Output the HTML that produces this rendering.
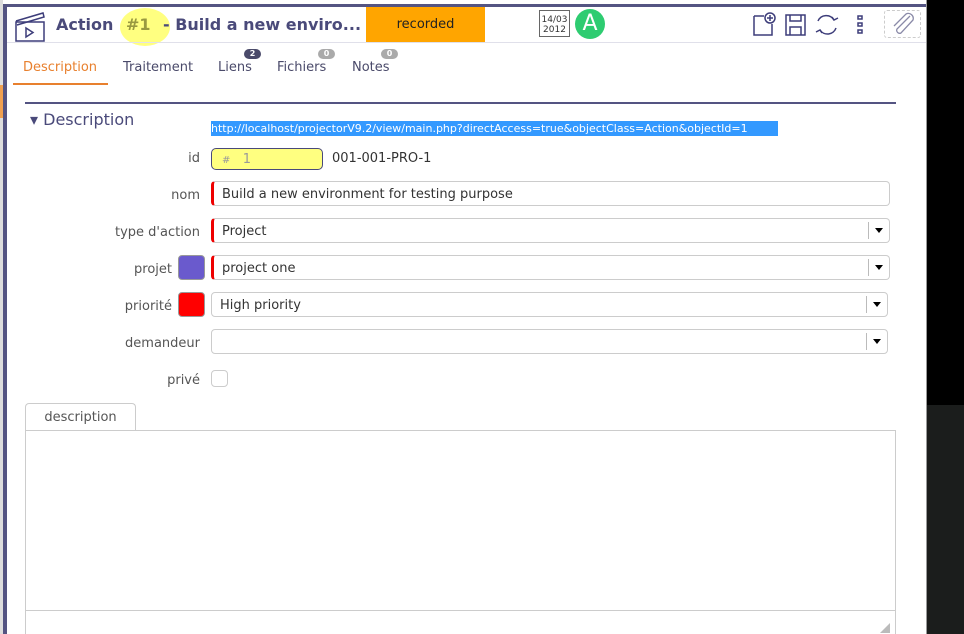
<!DOCTYPE html>
<html><head><meta charset="utf-8"><style>
html,body{margin:0;width:964px;height:634px;overflow:hidden}
body{background:#000;font-family:"DejaVu Sans","Liberation Sans",sans-serif;position:relative}
.page{position:absolute;left:0;top:0;width:926px;height:634px;background:#fff;border-right:1px solid #999}
.lb{position:absolute;left:0;top:0;width:3px;height:634px;background:#ddd}
.lo{position:absolute;left:0;top:85px;width:3px;height:33px;background:#f0a050}
.lp{position:absolute;left:3px;top:4px;width:4px;height:630px;background:#545482}
.tp{position:absolute;left:3px;top:4px;width:923px;height:3px;background:#545482}
.t{position:absolute;white-space:nowrap}
.hdr{position:absolute;left:7px;top:42px;width:919px;height:1px;background:#e0e0ea}
.lbl{position:absolute;right:0;font-size:13px;color:#555;text-align:right}
.inp{position:absolute;left:211px;height:25px;border:1px solid #ccc;border-radius:4px;box-sizing:border-box;font-size:13px;color:#333;line-height:25px;padding-left:10px}
.req{border-left:3px solid #e00;padding-left:8px}
.dd{position:absolute;right:0;top:3px;width:20px;height:17px;border-left:1px solid #bbb}
.dd:after{content:"";position:absolute;left:6px;top:6px;border:4px solid transparent;border-top:5px solid #000}
.sw{position:absolute;left:178px;width:27px;height:25px;border-radius:4px;border:1px solid #999;box-sizing:border-box}
.badge{position:absolute;font-size:8px;color:#fff;border-radius:6px;height:10px;line-height:10px;width:17px;text-align:center;font-weight:bold}
</style></head><body>
<div style="position:absolute;left:927px;top:405px;width:37px;height:229px;background:#1b1d1c"></div>
<div class="page"></div>
<div class="lb"></div><div class="lo"></div><div class="lp"></div><div class="tp"></div>
<svg style="position:absolute;left:14px;top:10px" width="32" height="32" viewBox="0 0 32 32" fill="none" stroke="#3d3d7a" stroke-width="1.5"><rect x="2" y="12" width="28" height="19"/><path d="M2 11 L29 3 L30 7 L3 15"/><path d="M12 18 L12 27 L19 22.5 Z"/></svg>
<div class="t" style="left:56px;top:15px;font-size:16px;font-weight:bold;color:#4a4a7a">Action</div>
<div style="position:absolute;left:120px;top:8px;width:50px;height:38px;border-radius:50%;background:#ffff80"></div>
<div class="t" style="left:126px;top:15px;font-size:16px;font-weight:bold;color:#999940">#1</div>
<div class="t" style="left:163px;top:15px;font-size:16px;font-weight:bold;color:#4a4a7a;width:200px;overflow:hidden">- Build a new enviro...</div>
<div class="t" style="left:366px;top:7px;width:119px;height:35px;background:#ffa500;font-size:13px;color:#222;text-align:center;line-height:35px">recorded</div>
<div style="position:absolute;left:539px;top:10px;width:31px;height:27px;border:1px solid #666;box-sizing:border-box;font-size:9px;line-height:10px;text-align:center;color:#333;padding-top:4px">14/03<br>2012</div>
<div style="position:absolute;left:575px;top:9px;width:30px;height:30px;border-radius:50%;background:#2ecc71;color:#fff;font-size:22px;text-align:center;line-height:30px">A</div>
<svg style="position:absolute;left:752px;top:12px" width="120" height="26" viewBox="0 0 120 26" fill="none" stroke="#3d3d7a" stroke-width="1.5"><path d="M2 4 H12 M20 12 V23 H2 V4"/><circle cx="18" cy="6" r="5"/><path d="M18 3 V9 M15 6 H21"/><rect x="34" y="3" width="19" height="20"/><path d="M38 3 V9 H49 V3 M38 23 V15 H49 V23"/><path d="M66 9 A9 9 0 0 1 82 8 M84 16 A9 9 0 0 1 68 18"/><path d="M80 5 L82 8 L86 6 M70 21 L68 18 L64 20"/><rect x="106" y="4" width="4" height="3"/><rect x="106" y="11" width="4" height="3"/><rect x="106" y="18" width="4" height="3"/></svg>
<div style="position:absolute;left:884px;top:10px;width:37px;height:28px;border:1px dashed #ccc;border-radius:3px;box-sizing:border-box"></div>
<svg style="position:absolute;left:890px;top:12px" width="26" height="24" viewBox="0 0 26 24" fill="none" stroke="#8a8aa8" stroke-width="1.3"><path d="M20 4 L7 17 A3 3 0 0 0 11 21 L23 8 A5 5 0 0 0 16 2 L4 14"/></svg>
<div class="hdr"></div>
<div class="t" style="left:23px;top:60px;font-size:13px;color:#e8802e">Description</div>
<div style="position:absolute;left:13px;top:83px;width:95px;height:2px;background:#e8802e"></div>
<div class="t" style="left:123px;top:60px;font-size:13px;color:#4a4a6a">Traitement</div>
<div class="t" style="left:218px;top:60px;font-size:13px;color:#4a4a6a">Liens</div>
<div class="badge" style="left:244px;top:49px;background:#4a4a6a">2</div>
<div class="t" style="left:277px;top:60px;font-size:13px;color:#4a4a6a">Fichiers</div>
<div class="badge" style="left:318px;top:49px;background:#aaa">0</div>
<div class="t" style="left:352px;top:60px;font-size:13px;color:#4a4a6a">Notes</div>
<div class="badge" style="left:381px;top:49px;background:#aaa">0</div>
<div style="position:absolute;left:25px;top:102px;width:871px;height:2px;background:#545482"></div>
<div class="t" style="left:30px;top:110px;font-size:16px;color:#4a4a7a">&#9662; Description</div>
<div class="t" style="left:211px;top:121px;width:567px;height:15px;background:#3399ff;font-size:11px;color:#fff;line-height:15px;overflow:hidden">http://localhost/projectorV9.2/view/main.php?directAccess=true&amp;objectClass=Action&amp;objectId=1</div>
<div style="position:absolute;left:0;top:1px;width:200px">
<div class="lbl" style="top:150px">id</div>
<div class="lbl" style="top:187px">nom</div>
<div class="lbl" style="top:224px">type d'action</div>
<div class="lbl" style="top:261px;right:28px">projet</div>
<div class="lbl" style="top:298px;right:28px">priorité</div>
<div class="lbl" style="top:335px">demandeur</div>
<div class="lbl" style="top:372px">privé</div>
</div>
<div class="inp" style="top:148px;width:112px;height:22px;line-height:22px;background:#ffff80;border-color:#4a4a7a;border-radius:5px;color:#999"><span style="font-size:10px">#</span>&nbsp;&nbsp; 1</div>
<div class="t" style="left:332px;top:151px;font-size:13px;color:#333">001-001-PRO-1</div>
<div class="inp req" style="top:181px;width:679px">Build a new environment for testing purpose</div>
<div class="inp req" style="top:218px;width:679px">Project<div class="dd"></div></div>
<div class="sw" style="top:255px;background:#6a5acd"></div>
<div class="inp req" style="top:255px;width:679px">project one<div class="dd"></div></div>
<div class="sw" style="top:292px;background:#f00"></div>
<div class="inp" style="top:292px;width:677px;padding-left:8px">High priority<div class="dd"></div></div>
<div class="inp" style="top:329px;width:677px"><div class="dd"></div></div>
<div style="position:absolute;left:211px;top:370px;width:17px;height:17px;border:1px solid #ccc;border-radius:4px;box-sizing:border-box"></div>
<div style="position:absolute;left:25px;top:403px;width:111px;height:28px;border:1px solid #ccc;border-bottom:none;border-radius:4px 4px 0 0;box-sizing:border-box;font-size:13px;color:#555;text-align:center;line-height:28px">description</div>
<div style="position:absolute;left:25px;top:430px;width:871px;height:204px;border:1px solid #ccc;border-bottom:none;box-sizing:border-box"></div>
<div style="position:absolute;left:25px;top:610px;width:871px;height:1px;background:#ccc"></div>
<div style="position:absolute;left:880px;top:623px;width:0;height:0;border-left:10px solid transparent;border-bottom:10px solid #bbb"></div>
</body></html>
